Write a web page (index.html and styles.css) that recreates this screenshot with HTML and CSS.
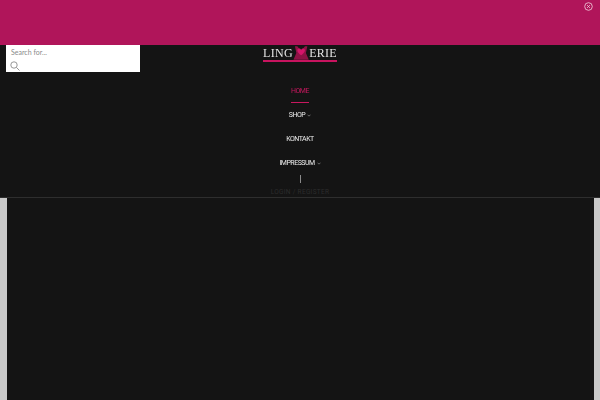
FILE: index.html
```html
<!DOCTYPE html>
<html lang="de">
<head>
<meta charset="utf-8">
<title>Lingerie</title>
<link rel="stylesheet" href="styles.css">
</head>
<body>
<div class="topbar">
  <button class="close" aria-label="Schließen">
    <svg width="9" height="9" viewBox="0 0 9 9"><circle cx="4.5" cy="4.5" r="3.8" fill="none" stroke="#f3d3e0" stroke-width=".8"/><path d="M3 3l3 3M6 3L3 6" stroke="#f3d3e0" stroke-width=".7"/></svg>
  </button>
</div>
<header class="header">
  <form class="search">
    <div class="search-text">Search for...</div>
    <svg class="search-icon" width="10" height="10" viewBox="0 0 10 10"><circle cx="4" cy="4" r="3.2" fill="none" stroke="#8b8b8b" stroke-width=".9"/><path d="M6.4 6.4L9.5 9.5" stroke="#8b8b8b" stroke-width=".9"/></svg>
  </form>
  <a class="logo">
    <span class="logo-words">
      <span>LING</span>
      <svg class="logo-mark" width="17" height="15" viewBox="0 0 17 15"><path d="M2 1h2.500L8.500 6 12.500 1H15L13.500 8l3 7H.5l3-7z" fill="#8f1245"/><path d="M8.500 10.500C5 7.500 4.200 6 4.700 4.300c.5-1.300 3-1.300 3.800.3.800-1.600 3.300-1.600 3.800-.3.500 1.700-.3 3.200-3.800 6.200z" fill="#d4156a"/></svg>
      <span>ERIE</span>
    </span>
    <span class="logo-rule"></span>
  </a>
  <nav class="nav">
    <a class="nav-item active"><span class="label">HOME</span></a>
    <a class="nav-item"><span class="label">SHOP</span><svg class="caret" width="4" height="3" viewBox="0 0 4 3"><path d="M.5.700L2 2.200 3.500.700" fill="none" stroke="#a8a8a8" stroke-width=".6"/></svg></a>
    <a class="nav-item"><span class="label">KONTAKT</span></a>
    <a class="nav-item"><span class="label">IMPRESSUM</span><svg class="caret" width="4" height="3" viewBox="0 0 4 3"><path d="M.5.700L2 2.200 3.500.700" fill="none" stroke="#a8a8a8" stroke-width=".6"/></svg></a>
  </nav>
  <div class="divider"></div>
  <div class="login">LOGIN / REGISTER</div>
</header>
<main class="content"></main>
</body>
</html>
```
FILE: styles.css
```css
* { box-sizing: border-box; }
html, body { margin: 0; height: 100%; }
body {
  width: 600px;
  height: 400px;
  overflow: hidden;
  background: #c9c9c9;
  font-family: "Lato", sans-serif;
  display: flex;
  flex-direction: column;
}
.topbar {
  height: 45px;
  flex: none;
  background: #b0155a;
  display: flex;
  justify-content: flex-end;
  align-items: flex-start;
  padding: 2px 7px 0 0;
}
.close {
  border: 0;
  padding: 0;
  background: none;
  display: flex;
}
.header {
  position: relative;
  height: 153px;
  flex: none;
  background: #141414;
  border-bottom: 1px solid #2e2e2e;
  display: flex;
  flex-direction: column;
  align-items: center;
}
.search {
  position: absolute;
  left: 6px;
  top: 0;
  width: 134px;
  height: 27px;
  background: #fff;
  padding: 2px 5px;
}
.search-text {
  font-size: 7px;
  line-height: 10px;
  color: #8a8a8a;
}
.search-icon {
  display: block;
  margin: 4px 0 0 -1px;
}
.logo {
  margin-top: 2px;
  display: flex;
  flex-direction: column;
  align-items: stretch;
  width: 74px;
}
.logo-words {
  display: flex;
  justify-content: space-between;
  align-items: center;
  height: 13px;
  font-family: "Liberation Serif", serif;
  font-size: 12px;
  letter-spacing: .3px;
  color: #e4e4e4;
  will-change: opacity;
}
.logo-mark { margin: -2px 0 0; }
.logo-rule {
  height: 2px;
  background: #c8145f;
}
.nav {
  margin-top: 17px;
  display: flex;
  flex-direction: column;
  align-items: center;
  font-family: "Roboto", sans-serif;
  will-change: opacity;
}
.nav-item {
  height: 24px;
  padding-bottom: 1px;
  display: flex;
  align-items: center;
  gap: 2px;
  font-size: 7px;
  letter-spacing: -.5px;
  color: #ececec;
  white-space: pre;
}
.nav-item.active {
  color: #c8185f;
  position: relative;
}
.nav-item.active::after {
  content: "";
  position: absolute;
  left: 0;
  right: 0;
  bottom: 0;
  height: 1px;
  background: #c8185f;
}
.caret {
  flex: none;
  margin-top: 2px;
}
.divider {
  width: 1px;
  height: 8px;
  background: #8a8a8a;
}
.login {
  margin-top: 4px;
  font-size: 6.500px;
  line-height: 10px;
  letter-spacing: .3px;
  color: #2c2c2c;
  font-family: "Roboto", sans-serif;
}
.content {
  flex: 1;
  margin: 0 6px 0 7px;
  background: #141414;
}
```
